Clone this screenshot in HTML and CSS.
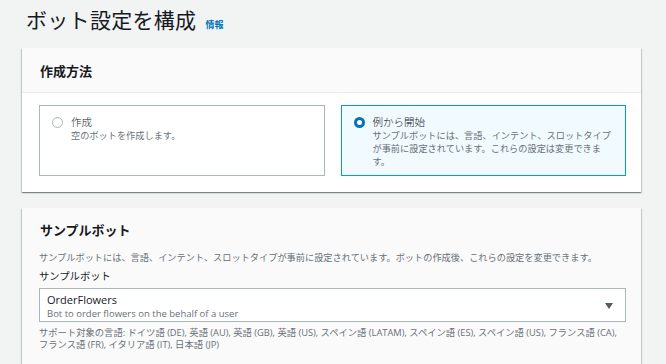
FILE: index.html
```html
<!DOCTYPE html>
<html lang="ja">
<head>
    <meta charset="UTF-8">
    <meta name="viewport" content="width=device-width, initial-scale=1.0">
    <title>ボット設定を構成</title>
    <link rel="stylesheet" href="styles.css">
</head>
<body>
    <div class="page-header">
        <h1>ボット設定を構成</h1>
        <a class="info-link" href="#">情報</a>
    </div>

    <div class="panel">
        <div class="panel-header">
            <h2>作成方法</h2>
        </div>
        <div class="panel-body">
            <div class="tiles">
                <div class="tile">
                    <span class="radio"></span>
                    <div class="tile-text">
                        <div class="tile-title">作成</div>
                        <div class="tile-desc">空のボットを作成します。</div>
                    </div>
                </div>
                <div class="tile selected">
                    <span class="radio checked"></span>
                    <div class="tile-text">
                        <div class="tile-title">例から開始</div>
                        <div class="tile-desc">サンプルボットには、言語、インテント、スロットタイプが事前に設定されています。これらの設定は変更できます。</div>
                    </div>
                </div>
            </div>
        </div>
    </div>

    <div class="panel panel-grey">
        <h2 class="section-title">サンプルボット</h2>
        <p class="section-desc">サンプルボットには、言語、インテント、スロットタイプが事前に設定されています。ボットの作成後、これらの設定を変更できます。</p>
        <label class="field-label">サンプルボット</label>
        <div class="select">
            <div class="select-value">OrderFlowers</div>
            <div class="select-desc">Bot to order flowers on the behalf of a user</div>
            <span class="caret"></span>
        </div>
        <p class="field-help">サポート対象の言語: ドイツ語 (DE), 英語 (AU), 英語 (GB), 英語 (US), スペイン語 (LATAM), スペイン語 (ES), スペイン語 (US), フランス語 (CA), フランス語 (FR), イタリア語 (IT), 日本語 (JP)</p>
    </div>
</body>
</html>
```

FILE: styles.css
```css
* {
    margin: 0;
    padding: 0;
    box-sizing: border-box;
}

body {
    font-family: 'Open Sans', 'Noto Sans CJK JP', sans-serif;
    background: #f2f3f3;
    color: #16191f;
    padding: 0 25px 0 22px;
}

.page-header {
    display: flex;
    align-items: baseline;
    gap: 9px;
    padding: 8px 0 0 4px;
    height: 48px;
}

.page-header h1 {
    font-size: 21px;
    font-weight: 400;
    line-height: 24px;
    letter-spacing: 0.3px;
}

.info-link {
    font-size: 9px;
    font-weight: 700;
    color: #0073bb;
    text-decoration: none;
}

.panel {
    width: 619px;
    background: white;
    box-shadow: 0 1px 1px 0 rgba(0,28,36,0.3), 1px 1px 1px 0 rgba(0,28,36,0.15), -1px 1px 1px 0 rgba(0,28,36,0.15);
}

.panel-header {
    height: 45px;
    background: #fafafa;
    border-bottom: 1px solid #eaeded;
    display: flex;
    align-items: center;
    padding-left: 18px;
}

.panel-header h2 {
    font-size: 13px;
    font-weight: 700;
}

.panel-body {
    padding: 12px 15px 16px 17px;
}

.tiles {
    display: grid;
    grid-template-columns: 1fr 1fr;
    gap: 16px;
}

.tile {
    display: flex;
    gap: 8px;
    min-height: 71px;
    padding: 10px 10px 7px 12px;
    border: 1px solid #aab7b8;
    background: white;
}

.tile.selected {
    border-color: #00a1c9;
    background: #f1faff;
}

.radio {
    flex: none;
    width: 11px;
    height: 11px;
    margin-top: 1px;
    border: 1px solid #aab7b8;
    border-radius: 50%;
    background: white;
}

.radio.checked {
    border: 3.5px solid #0073bb;
}

.tile-title {
    font-size: 10.5px;
    font-weight: 300;
    line-height: 13px;
}

.tile-desc {
    font-size: 9.2px;
    line-height: 13px;
    color: #687078;
}

.panel-grey {
    margin-top: 16px;
    background: #fafafa;
    padding: 13px 15px 20px 17px;
}

.section-title {
    font-size: 13px;
    font-weight: 700;
    line-height: 18px;
    padding-left: 1px;
}

.section-desc {
    margin-top: 12px;
    font-size: 9.2px;
    line-height: 13px;
    color: #687078;
}

.field-label {
    display: block;
    margin-top: 6px;
    font-size: 10.3px;
    line-height: 13px;
}

.select {
    position: relative;
    margin-top: 5px;
    height: 34px;
    background: white;
    border: 1px solid #aab7b8;
    padding: 4px 40px 0 7px;
}

.select-value {
    font-size: 11px;
    line-height: 14px;
}

.select-desc {
    font-size: 9.5px;
    line-height: 13px;
    color: #687078;
}

.caret {
    position: absolute;
    right: 12px;
    top: 14px;
    width: 0;
    height: 0;
    border-left: 4px solid transparent;
    border-right: 4px solid transparent;
    border-top: 6px solid #545b64;
}

.field-help {
    margin-top: 5px;
    padding-right: 8px;
    font-size: 9.3px;
    line-height: 12px;
    color: #687078;
}
```
